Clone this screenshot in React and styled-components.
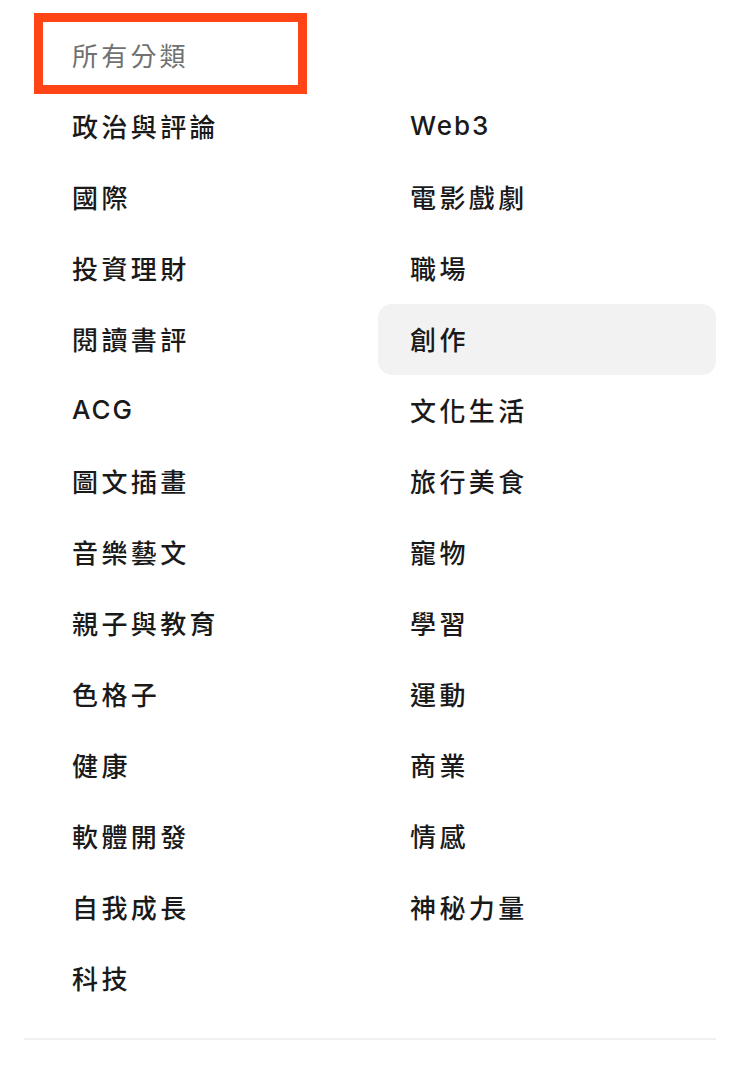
import React from "react";
import styled, { createGlobalStyle } from "styled-components";

const Global = createGlobalStyle`
  html, body { margin: 0; padding: 0; background: #ffffff; }
  body { font-family: "Inter", "Noto Sans CJK TC", sans-serif; }
`;

const Page = styled.div`
  width: 740px;
  box-sizing: border-box;
  padding: 13px 24px 0 24px;
`;

const Header = styled.div`
  width: 273px;
  height: 81px;
  box-sizing: border-box;
  margin-left: 10px;
  margin-bottom: -3px;
  border: 9px solid #ff4416;
  display: flex;
  align-items: center;
  padding-left: 29px;
  padding-top: 2px;
  font-size: 26px;
  letter-spacing: 3.2px;
  color: #717171;
  font-weight: 400;
`;

const Grid = styled.div`
  margin-left: 16px;
  display: grid;
  grid-template-columns: 338px 338px;
  grid-template-rows: repeat(13, 71px);
  grid-auto-flow: column;
`;

const Item = styled.div`
  display: flex;
  align-items: center;
  padding-left: 32px;
  padding-bottom: 2px;
  border-radius: 14px;
  background: ${(p) => (p.$active ? "#f2f2f2" : "transparent")};
  font-size: 26px;
  letter-spacing: ${(p) => (p.$latin ? "2px" : "3.4px")};
  color: #1a1a1a;
  font-weight: 500;
`;

const Divider = styled.div`
  margin-top: 24px;
  height: 2px;
  background: #f1f1f1;
`;

const left = [
  "政治與評論",
  "國際",
  "投資理財",
  "閱讀書評",
  "ACG",
  "圖文插畫",
  "音樂藝文",
  "親子與教育",
  "色格子",
  "健康",
  "軟體開發",
  "自我成長",
  "科技",
];

const right = [
  "Web3",
  "電影戲劇",
  "職場",
  "創作",
  "文化生活",
  "旅行美食",
  "寵物",
  "學習",
  "運動",
  "商業",
  "情感",
  "神秘力量",
];

const isLatin = (t) => /^[A-Za-z0-9]+$/.test(t);

export default function App() {
  return (
    <Page>
      <Global />
      <Header>所有分類</Header>
      <Grid>
        {left.map((t) => (
          <Item key={t} $latin={isLatin(t)}>
            {t}
          </Item>
        ))}
        {right.map((t) => (
          <Item key={t} $latin={isLatin(t)} $active={t === "創作"}>
            {t}
          </Item>
        ))}
      </Grid>
      <Divider />
    </Page>
  );
}
